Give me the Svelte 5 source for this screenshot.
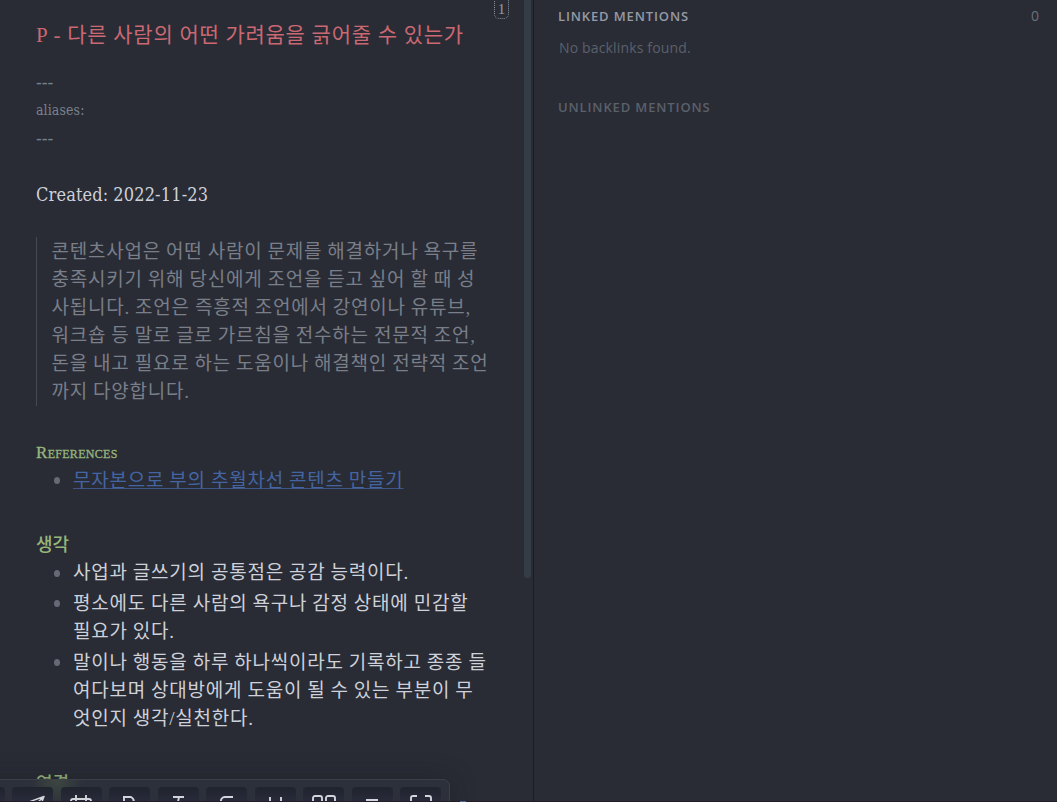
<script lang="ts">
	const quote = [
		'콘텐츠사업은 어떤 사람이 문제를 해결하거나 욕구를',
		'충족시키기 위해 당신에게 조언을 듣고 싶어 할 때 성',
		'사됩니다. 조언은 즉흥적 조언에서 강연이나 유튜브,',
		'워크숍 등 말로 글로 가르침을 전수하는 전문적 조언,',
		'돈을 내고 필요로 하는 도움이나 해결책인 전략적 조언',
		'까지 다양합니다.'
	];

	const thoughts = [
		['사업과 글쓰기의 공통점은 공감 능력이다.'],
		['평소에도 다른 사람의 욕구나 감정 상태에 민감할', '필요가 있다.'],
		[
			'말이나 행동을 하루 하나씩이라도 기록하고 종종 들',
			'여다보며 상대방에게 도움이 될 수 있는 부분이 무',
			'엇인지 생각/실천한다.'
		]
	];

	const tools = [
		{ name: 'blank', path: '' },
		{ name: 'send', path: 'M23 1.5 1 9.5l9 4 5 9zM23 1.5 10 13.5' },
		{ name: 'calendar', path: 'M4 4h16a2 2 0 0 1 2 2v16H2V6a2 2 0 0 1 2-2zM7 0v7M17 0v7M2 9h20' },
		{ name: 'bold', path: 'M5 2h8a5 5 0 0 1 0 9H5M5 11h10a5 5 0 0 1 0 10H5M6 2v19' },
		{ name: 'italic', path: 'M7 2h11M4 22h12M13 2l-4 20' },
		{ name: 'strike', path: 'M18 2h-8a4 4 0 0 0-4 5c1 5 12 2 12 8 0 4-4 5-12 4M2 12h20' },
		{ name: 'underline', path: 'M7 2v9a5.5 5.5 0 0 0 11 0V2M4 22h16' },
		{ name: 'grid', path: 'M3 1h5a2 2 0 0 1 2 2v6H1V3a2 2 0 0 1 2-2zM16 1h5a2 2 0 0 1 2 2v6h-9V3a2 2 0 0 1 2-2zM1 14h9v8H1zM14 14h9v8h-9z' },
		{ name: 'heading', path: 'M6 5h12M12 5v16' },
		{ name: 'fullscreen', path: 'M8 1H4a2 2 0 0 0-2 2v4M16 1h4a2 2 0 0 1 2 2v4M2 16v6h6M22 16v6h-6' }
	];
</script>

<div class="workspace">
	<main class="note">
		<span class="counter">1</span>
		<h1>P - 다른 사람의 어떤 가려움을 긁어줄 수 있는가</h1>
		<div class="frontmatter">
			<div class="fence">---</div>
			<div>aliases:</div>
			<div class="fence">---</div>
		</div>
		<p class="created">Created: 2022-11-23</p>
		<blockquote>
			{#each quote as line}
				<div>{line}</div>
			{/each}
		</blockquote>

		<h2 class="references">References</h2>
		<ul>
			<li><a href="#note">무자본으로 부의 추월차선 콘텐츠 만들기</a></li>
		</ul>

		<h2>생각</h2>
		<ul>
			{#each thoughts as item}
				<li>
					{#each item as line}
						<div>{line}</div>
					{/each}
				</li>
			{/each}
		</ul>

		<h2>연결</h2>
	</main>

	<div class="scrollbar"><div class="thumb"></div></div>

	<aside>
		<div class="section linked">
			<span>LINKED MENTIONS</span>
			<span class="count">0</span>
		</div>
		<p class="empty">No backlinks found.</p>
		<div class="section unlinked">UNLINKED MENTIONS</div>
	</aside>

	<div class="toolbar">
		{#each tools as tool}
			<button aria-label={tool.name}>
				<svg viewBox="0 0 24 24" class={tool.name}><path d={tool.path} /></svg>
			</button>
		{/each}
	</div>
	<div class="edge"><i></i></div>
</div>

<style>
	:global(body) {
		background: #292c35;
		overflow: hidden;
	}

	.workspace {
		position: relative;
		display: grid;
		grid-template-columns: 524px 9px 1fr;
		width: 1057px;
		height: 802px;
		overflow: hidden;
		background: #292c35;
	}

	.note {
		padding: 20px 0 0 36px;
		font-family: 'Liberation Serif', 'Noto Sans CJK KR', serif;
		font-size: 19px;
		font-weight: 400;
		line-height: 28.13px;
		letter-spacing: 0.77px;
		word-spacing: -0.45px;
		color: #ced1d9;
		white-space: nowrap;
		min-width: 0;
		overflow: hidden;
	}

	h1 {
		margin: 0;
		height: 48px;
		font-size: 21px;
		font-weight: 400;
		line-height: 31px;
		letter-spacing: 0.72px;
		word-spacing: 0;
		color: #cb6872;
	}

	.counter {
		position: absolute;
		left: 494px;
		top: -8px;
		width: 13px;
		height: 25px;
		border: 1px dotted #8b909b;
		border-radius: 5px;
		font-size: 15px;
		line-height: 32px;
		letter-spacing: 0;
		text-align: center;
		color: #969ba6;
	}

	.frontmatter {
		font-family: 'DejaVu Serif Condensed', 'DejaVu Serif', serif;
		font-stretch: condensed;
		font-size: 14px;
		letter-spacing: 0.1px;
		color: #7b808b;
	}

	.fence {
		font-size: 19px;
		letter-spacing: 0;
	}

	.created {
		margin: 28.5px 0 27.5px;
		font-family: 'DejaVu Serif Condensed', 'DejaVu Serif', serif;
		font-stretch: condensed;
		font-size: 18px;
		letter-spacing: 0.15px;
	}

	blockquote {
		margin: 0;
		padding: 1px 0 0 15px;
		height: 168px;
		border-left: 1px solid #454955;
		color: #797e89;
	}

	blockquote div {
		margin-left: -0.5px;
	}

	h2 {
		margin: 36.3px 0 0;
		font-size: 18px;
		font-weight: 500;
		line-height: 28px;
		letter-spacing: 0;
		color: #98b67c;
	}

	.references {
		margin-top: 33.2px;
		font-size: 17px;
		font-variant: small-caps;
		letter-spacing: 0.3px;
		-webkit-text-stroke: 0.3px;
	}

	ul {
		margin: 0;
		padding: 0;
		list-style: none;
	}

	li {
		position: relative;
		padding-left: 37px;
		margin-bottom: 2.7px;
	}

	li:last-child {
		margin-bottom: 0;
	}

	li::before {
		content: '';
		position: absolute;
		left: 18px;
		top: 10.4px;
		width: 6px;
		height: 7px;
		border-radius: 50%;
		background: #666a76;
	}

	a {
		color: #4465a2;
		text-decoration: underline;
		text-decoration-thickness: 1px;
		text-decoration-color: #3d5686;
		text-decoration-skip-ink: none;
		text-underline-offset: 1px;
	}

	.scrollbar {
		padding-right: 2px;
	}

	.thumb {
		height: 578px;
		background: #343d46;
		border-radius: 0 0 4px 4px;
	}

	aside {
		border-left: 1px solid #1b1d25;
		padding: 6px 18px 0 24px;
		font-family: 'Open Sans', 'Noto Sans', sans-serif;
		color: #5b606b;
	}

	.section {
		display: flex;
		justify-content: space-between;
		font-size: 13px;
		font-weight: 600;
		line-height: 20px;
		letter-spacing: 0.87px;
	}

	.linked {
		color: #959aa5;
	}

	.count {
		font-size: 14px;
		font-weight: 400;
		letter-spacing: 0;
		color: #6b707b;
	}

	.empty {
		margin: 12px 0 39px 1px;
		font-size: 14px;
		line-height: 20px;
		letter-spacing: 0.15px;
	}

	.toolbar {
		position: absolute;
		left: -45.5px;
		top: 779px;
		display: flex;
		gap: 7.5px;
		width: 495.5px;
		height: 46px;
		box-sizing: border-box;
		padding: 7px 8px 0;
		border: 1px solid #3b4048;
		border-radius: 7px;
		background: radial-gradient(circle at 101px 0, #3d4741 0, #2c303a 26px);
		box-shadow: 0 0 24px rgba(20, 22, 28, 0.35);
	}

	button {
		display: flex;
		justify-content: center;
		align-items: flex-start;
		flex: none;
		width: 41px;
		height: 41px;
		padding: 8px 0 0;
		border: 0;
		border-radius: 4px;
		background: linear-gradient(#20242d, #292c3c 17px);
	}

	svg {
		width: 24px;
		height: 24px;
		fill: none;
		stroke: #d2d5dc;
		stroke-width: 1.9;
		stroke-linejoin: round;
		overflow: visible;
	}

	.send {
		stroke-width: 1.4;
	}

	.edge {
		position: absolute;
		left: 0;
		right: 0;
		bottom: 0;
		height: 1px;
		padding-left: 460px;
		background: #241d29;
	}

	.edge i {
		display: block;
		width: 6px;
		height: 1px;
		background: #4d659a;
	}
</style>
